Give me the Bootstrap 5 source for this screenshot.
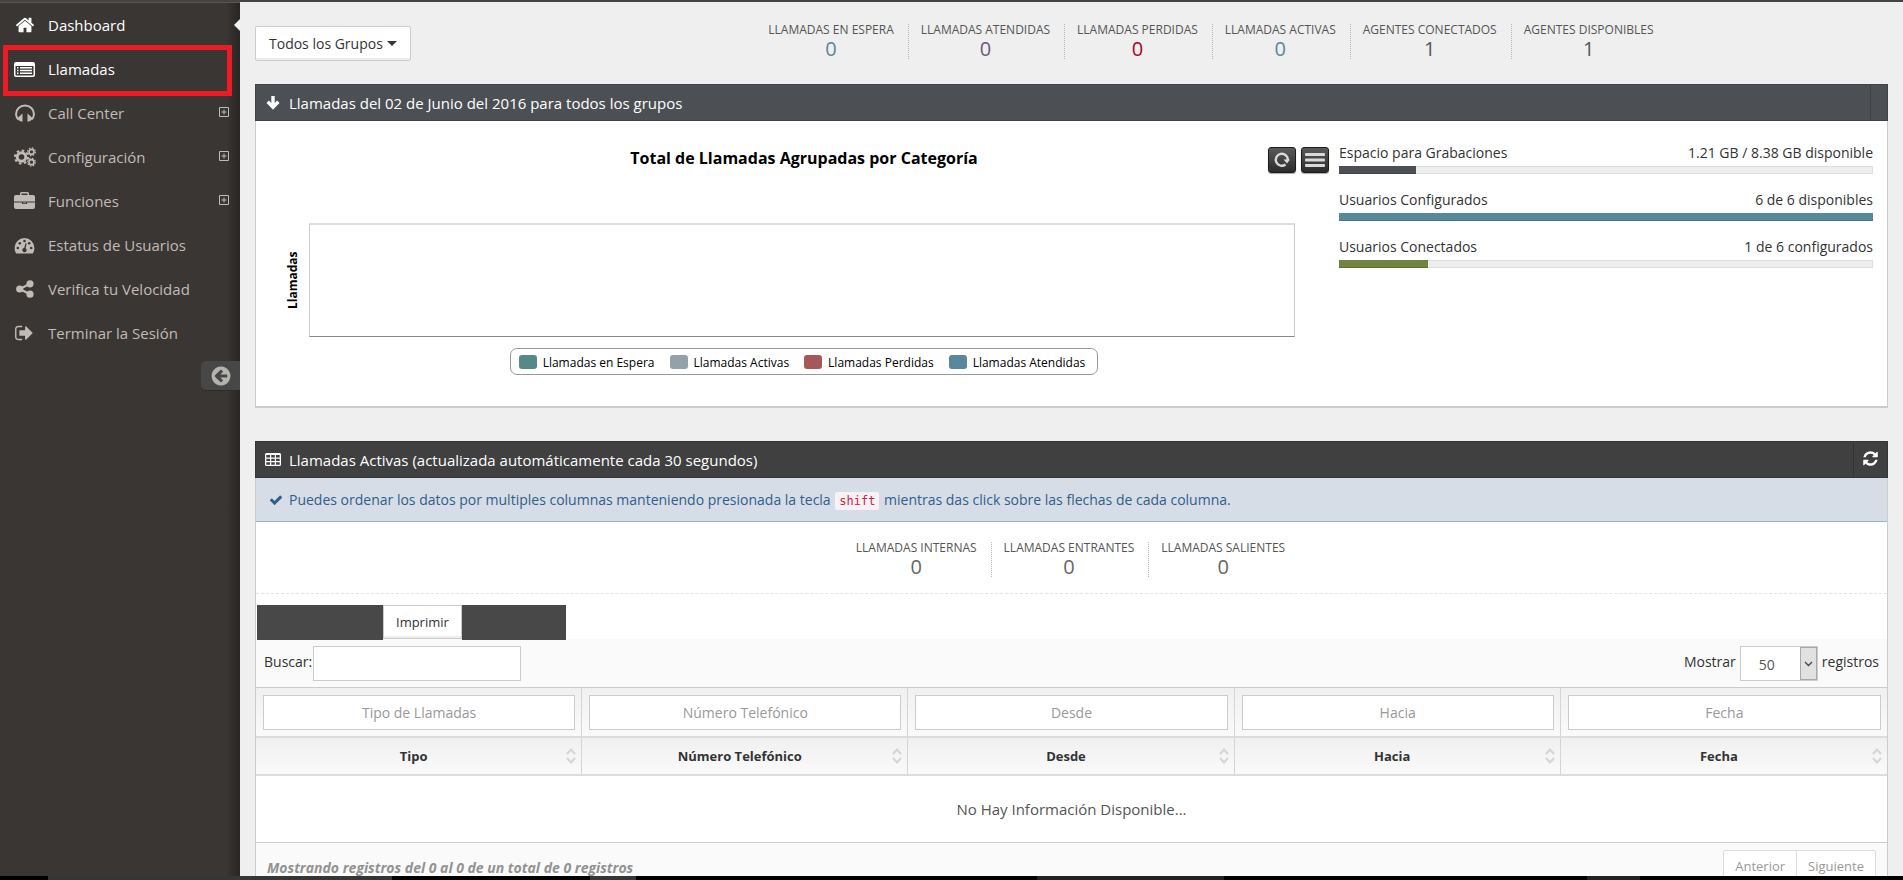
<!DOCTYPE html>
<html lang="es">
<head>
<meta charset="utf-8">
<meta name="viewport" content="width=device-width, initial-scale=1">
<title>Llamadas - Dashboard</title>
<link href="https://cdn.jsdelivr.net/npm/bootstrap@5.3.0/dist/css/bootstrap.min.css" rel="stylesheet">
<style>
  body { font-family: "Open Sans", "Noto Sans", sans-serif; font-size: 14px; line-height: 20px; color: #333; background: #efefef; }
  a { text-decoration: none; }
  svg { display: block; fill: currentColor; flex: none; }

  .top-line { height: 2px; background: #474341; }
  .sidebar { width: 240px; flex: none; color: #c0bbb7; padding-top: 1px;
    background: linear-gradient(to left, #292522, #3a3633 14px); box-shadow: inset 0 1px 0 #5a5652; }
  .side-link { height: 44px; padding: 0 11px 0 14px; gap: 12px; font-size: 15px; color: #c0bbb7; position: relative; }
  .side-link:hover, .side-link.active { color: #fff; }
  .side-link .expand { margin: 0 0 2px auto; }
  .pointer::before { content: ""; position: absolute; right: 0; top: 16px; border: 6px solid transparent; border-left: 0; border-right-color: #eef1f6; }
  .marked::after { content: ""; position: absolute; inset: -2px 8px -5px 3px; border: 5px solid #ed1c24; }
  .minify { width: 39px; height: 30px; margin-top: 6px; border: 0; border-bottom: 1px solid #2c2927; border-radius: 5px 0 0 5px; background: #474747; color: #b5b3b0; }

  .page { padding: 24px 15px 0; }
  .page-head { margin-bottom: 23px; }
  .group-btn { height: 35px; padding: 0 13px; font-size: 14px; background: #fff; color: #333; border: 1px solid #ccc; border-radius: 2px; box-shadow: inset 0 -2px 0 #ededed; gap: 4px; }
  .group-btn:hover { background: #f5f5f5; border-color: #adadad; color: #333; }
  .caret-down { border: 5px solid transparent; border-top-color: #333; border-bottom: 0; }
  .stat { height: 35px; padding: 0 14px 0 12px; text-align: center; border-left: 1px dotted #b5b5b5; }
  .stat:first-child { border-left: 0; }
  .stat-label { font-size: 12px; line-height: 11px; color: #555; text-transform: uppercase; }
  .stat-value { font-size: 20px; line-height: 28px; color: #666; }
  .page-stats { margin: -2px 13.5% 0 0; }
  .v-blue { color: #57889c; } .v-purple { color: #6e587a; } .v-red { color: #a90329; } .v-dark { color: #555; }

  .widget-head { height: 37px; padding-left: 9px; font-size: 15px; color: #fff; border: 1px solid rgba(0, 0, 0, .15); }
  .widget-head h2 { font-size: 15px; line-height: 20px; font-weight: 400; margin: 0; }
  .widget-head .icon-cell { width: 16px; }
  .widget-head.slate { background: #4c4f53; }
  .widget-head.dark { background: #404040; }
  .head-end { border: 0; border-left: 1px solid rgba(0, 0, 0, .18); background: none; color: #fff; }
  .widget-body { background: #fff; border: 1px solid #ccc; border-top: 0; }
  .widget-body.calls { border-bottom-width: 2px; }
  .widget-gap { margin-top: 33px; }

  .chart { padding: 25px 44px 31px 29px; font-family: "Open Sans", sans-serif; color: #000; position: relative; }
  .chart-title { font-size: 16px; line-height: 24px; font-weight: 700; margin: 0 0 53px; padding-left: 28px; text-align: center; }
  .chart-tools { position: absolute; top: 26px; right: 10px; gap: 5px; }
  .chart-tool { width: 28px; height: 26px; border: 1px solid #1c1c1c; border-radius: 3px; background: linear-gradient(#5a5a5a, #2b2b2b); color: #dadada; padding: 0; box-shadow: 0 1px 1px #aaa; }
  .axis-name { width: 24px; font-size: 12px; line-height: 16px; font-weight: 700; writing-mode: vertical-rl; transform: rotate(180deg); text-align: center; padding-left: 7px; }
  .plot { height: 114px; border: 1px solid #ccc; border-top: 2px solid #dedede; border-bottom-color: #888; }
  .legend-row { padding-left: 28px; margin-top: 11px; }
  .legend-box { height: 27px; border: 1px solid #999; border-radius: 7px; padding: 2px 12px 0 8px; gap: 15px; font-size: 12px; }
  .legend-item { gap: 6px; }
  .swatch { width: 18px; height: 14px; border-radius: 3px; margin-bottom: 2px; }

  .usage { width: 33.6%; flex: none; padding: 22px 14px 0 0; }
  .usage-item { margin-bottom: 16px; }
  .usage .progress { height: 8px; margin-top: 3px; border-radius: 0; background: #ededed; box-shadow: inset 0 0 0 1px #dedede; }
  .usage .progress-bar { box-shadow: inset 0 -1px 0 rgba(0, 0, 0, .15); }
  .b-slate { background-color: #4c4f53; } .b-blue { background-color: #57889c; } .b-green { background-color: #71843f; }

  .tip { height: 44px; margin: 0; padding: 0 14px 0 13px; gap: 6px; background: #d6dde7; border-bottom: 1px solid #9cb4c5; color: #305d8c; }
  .tip code { font: 12px/17px "DejaVu Sans Mono", monospace; color: #c7254e; background: #f9f2f4; border-radius: 2px; padding: 2px 4px; margin: 0 1px; }
  .call-stats { padding: 20px 0 16px; border-bottom: 1px dashed #e5e5e5; }
  .export { margin: 11px 0 0 1px; height: 34px; }
  .export .btn { font-size: 13px; line-height: 20px; padding: 0 12px; border: 1px solid #ccc; border-radius: 0; background: #fff; color: #333; box-shadow: inset 0 -2px 0 #ededed; }
  .export .btn.blank { background: #484848; border-color: #484848; box-shadow: none; margin-bottom: -1px; }
  .blank-wide { width: 126px; } .blank-narrow { width: 104px; }

  .grid-bar { background: #fafafa; padding: 7px 8px 6px; border-bottom: 1px solid #ccc; }
  .grid-bar .bar-text { padding-top: 6px; }
  .grid-input { height: 35px; border: 1px solid #ccc; border-radius: 0; background: #fff; color: #555; font-size: 14px; padding: 0 12px; }
  .grid-input::placeholder { color: #999; opacity: 1; }
  .search-box { width: 208px; margin-left: 1px; }
  .select-wrap { position: relative; width: 78px; margin: 0 4px; }
  .select-wrap select { width: 100%; appearance: none; padding: 2px 0 0 18px; }
  .select-wrap .drop { position: absolute; inset: 1px 1px 1px auto; width: 17px; background: #e1e1e1; border: 1px solid #a9a9a9; color: #444; pointer-events: none; }

  .grid-table { table-layout: fixed; border-collapse: separate; border-spacing: 0; margin: 0; }
  .grid-table th { background: linear-gradient(#f0f0f0, #fafafa); border-bottom: 2px solid #ddd; border-right: 1px solid #d5d5d5; padding: 0; }
  .grid-table th:last-child { border-right: 0; }
  .grid-table .filters th { padding: 7px 6px 6px 7px; }
  .grid-table .filters input { width: 100%; text-align: center; font-weight: 400; display: block; }
  .grid-table .titles th { height: 38px; font-size: 13px; color: #333; }
  .sort-cell { padding: 0 5px 0 13px; }
  .sort-cell svg { fill: none; stroke: #d5d5d5; stroke-width: 2; }
  .grid-table td { height: 67px; font-size: 15px; color: #555; text-align: center; vertical-align: middle; border-bottom: 1px solid #ccc; padding: 0; }
  .grid-foot { background: #fafafa; padding: 7px 11px 10px; color: #999; }
  .grid-foot .info { font-weight: 700; font-style: italic; padding-top: 8px; color: #929292; }
  .grid-foot .page-link { font-size: 13px; line-height: 20px; padding: 5px 11px; color: #999; border-color: #ddd; }
  .pagination { --bs-pagination-border-radius: 2px; margin: 0; }

  .taskbar { height: 4px; flex: none; background: linear-gradient(to right, #000 2.5%, #363636 2.5% 20.6%, #000 20.6% 31%, #363636 31% 33.4%, #000 33.4% 54.5%, #222 54.5% 64.3%, #000 64.3% 83.4%, #222 83.4% 86.2%, #000 86.2%); }
</style>
</head>
<body class="vh-100 overflow-hidden d-flex flex-column">
<div class="top-line flex-shrink-0"></div>
<div class="d-flex flex-grow-1 overflow-hidden">

  <nav class="sidebar d-flex flex-column" aria-label="Principal">
    <a href="#" class="side-link active pointer d-flex align-items-center">
      <svg width="22" height="20" viewBox="0 0 1792 1792"><path d="M1472 992v480q0 26-19 45t-45 19h-384v-384h-256v384h-384q-26 0-45-19t-19-45v-480q0-1 .5-3t.5-3l575-474 575 474q1 2 1 6zm223-69l-62 74q-8 9-21 11h-3q-13 0-21-7l-692-577-692 577q-12 8-24 7-13-2-21-11l-62-74q-8-10-7-23.500t11-21.500l719-599q32-26 76-26t76 26l244 204v-195q0-14 9-23t23-9h192q14 0 23 9t9 23v408l219 182q10 8 11 21.500t-7 23.500z"/></svg>
      <span>Dashboard</span></a>
    <a href="#" class="side-link active marked d-flex align-items-center">
      <svg width="22" height="20" viewBox="0 0 22 20"><path fill-rule="evenodd" d="M2 3h17a2 2 0 0 1 2 2v11a2 2 0 0 1-2 2H2a2 2 0 0 1-2-2V5a2 2 0 0 1 2-2zM1.500 7v9l.5.500h17l.5-.5V7z"/><path d="M3 8h1.500v1.500H3zM6 8h12v1.500H6zM3 10.700h1.500v1.500H3zM6 10.700h12v1.500H6zM3 13.400h1.500v1.500H3zM6 13.400h12v1.500H6z"/></svg>
      <span>Llamadas</span></a>
    <a href="#" class="side-link d-flex align-items-center">
      <svg width="22" height="20" viewBox="0 0 22 20"><path d="M4.500 16.500A8 8 0 0 1 2 11.200a9 8.700 0 0 1 18 0 8 8 0 0 1-2.500 5.300" fill="none" stroke="currentColor" stroke-width="2"/><path d="M8.500 10.500v8.300Q5 18.300 3 15.500zM13.500 10.500v8.300q3.500-.5 5.500-3.300z"/></svg>
      <span>Call Center</span>
      <svg class="expand" width="10" height="10" viewBox="0 0 10 10"><path d="M.5.500h9v9h-9zM2.500 5h5M5 2.500v5" fill="none" stroke="currentColor"/></svg></a>
    <a href="#" class="side-link d-flex align-items-center">
      <svg width="22" height="20" viewBox="0 0 22 20"><g fill="none" stroke="currentColor"><circle cx="7.500" cy="10" r="4.300" stroke-width="3"/><circle cx="7.500" cy="10" r="6.600" stroke-width="2" stroke-dasharray="2.600 2.583"/><circle cx="17.500" cy="4.800" r="2.500" stroke-width="1.700"/><circle cx="17.500" cy="4.800" r="3.900" stroke-width="1.200" stroke-dasharray="1.500 1.563"/><circle cx="17.500" cy="15.200" r="2.500" stroke-width="1.700"/><circle cx="17.500" cy="15.200" r="3.900" stroke-width="1.200" stroke-dasharray="1.500 1.563"/></g></svg>
      <span>Configuración</span>
      <svg class="expand" width="10" height="10" viewBox="0 0 10 10"><path d="M.5.500h9v9h-9zM2.500 5h5M5 2.500v5" fill="none" stroke="currentColor"/></svg></a>
    <a href="#" class="side-link d-flex align-items-center">
      <svg width="22" height="20" viewBox="0 0 22 20"><path fill-rule="evenodd" d="M6 4V2.500Q6 1 7.500 1h6Q15 1 15 2.500V4h4q2 0 2 2v4.500H0V6q0-2 2-2zM7.500 4h6V2.500h-6zM0 11.500h8V13h5v-1.500h8V16q0 2-2 2H2q-2 0-2-2zM9 11.500h3v.700H9z"/></svg>
      <span>Funciones</span>
      <svg class="expand" width="10" height="10" viewBox="0 0 10 10"><path d="M.5.500h9v9h-9zM2.500 5h5M5 2.500v5" fill="none" stroke="currentColor"/></svg></a>
    <a href="#" class="side-link d-flex align-items-center">
      <svg width="22" height="20" viewBox="0 0 22 20"><path d="M2.200 18.500A9.900 9.900 0 0 1 .6 13a9.900 9.900 0 0 1 19.800 0 9.900 9.900 0 0 1-1.600 5.500z"/><g fill="#3a3633"><circle cx="3.800" cy="13" r="1.300"/><circle cx="5.800" cy="8.200" r="1.300"/><circle cx="10.500" cy="6" r="1.300"/><circle cx="15.200" cy="8.200" r="1.300"/><circle cx="17.200" cy="13" r="1.300"/><path d="M11.500 8.200l1.200.3-1.100 4.700a2.200 2.200 0 1 1-1.400-.3z"/></g></svg>
      <span>Estatus de Usuarios</span></a>
    <a href="#" class="side-link d-flex align-items-center">
      <svg width="22" height="20" viewBox="0 0 22 20"><circle cx="5.700" cy="10" r="3.600"/><circle cx="16" cy="4.800" r="3.600"/><circle cx="16" cy="15.200" r="3.600"/><path d="M16 4.800L5.700 10 16 15.200" fill="none" stroke="currentColor" stroke-width="2.200"/></svg>
      <span>Verifica tu Velocidad</span></a>
    <a href="#" class="side-link d-flex align-items-center">
      <svg width="22" height="20" viewBox="60 0 1792 1792"><path d="M704 1440q0 4 1 20t.5 26.500-3 23.500-10 19.500-20.500 6.500h-320q-119 0-203.500-84.500t-84.500-203.500v-704q0-119 84.500-203.500t203.500-84.500h320q13 0 22.500 9.500t9.500 22.500q0 4 1 20t.5 26.500-3 23.500-10 19.500-20.500 6.500h-320q-66 0-113 47t-47 113v704q0 66 47 113t113 47h312l11.500 1 11.500 3 8 5.500 7 9 2 13.500zm928-544q0 26-19 45l-544 544q-19 19-45 19t-45-19-19-45v-288h-448q-26 0-45-19t-19-45v-384q0-26 19-45t45-19h448v-288q0-26 19-45t45-19 45 19l544 544q19 19 19 45z"/></svg>
      <span>Terminar la Sesión</span></a>
    <button type="button" class="minify align-self-end d-flex align-items-center justify-content-center" aria-label="Contraer menú">
      <svg width="22" height="22" viewBox="0 0 1792 1792"><path d="M1408 960v-128q0-26-19-45t-45-19h-502l189-189q19-19 19-45t-19-45l-91-91q-18-18-45-18t-45 18l-362 362-91 91q-18 18-18 45t18 45l91 91 362 362q18 18 45 18t45-18l91-91q18-18 18-45t-18-45l-189-189h502q26 0 45-19t19-45zm256-64q0 209-103 385.500t-279.500 279.500-385.500 103-385.500-103-279.500-279.500-103-385.500 103-385.500 279.500-279.500 385.500-103 385.500 103 279.500 279.500 103 385.500z"/></svg>
    </button>
  </nav>

  <main class="page flex-grow-1 overflow-hidden">
    <div class="page-head d-flex justify-content-between">
      <button type="button" class="btn group-btn d-flex align-items-center">Todos los Grupos<span class="caret-down"></span></button>
      <ul class="page-stats list-unstyled d-flex">
        <li class="stat"><div class="stat-label">Llamadas en espera</div><div class="stat-value v-blue">0</div></li>
        <li class="stat"><div class="stat-label">Llamadas atendidas</div><div class="stat-value v-purple">0</div></li>
        <li class="stat"><div class="stat-label">Llamadas perdidas</div><div class="stat-value v-red">0</div></li>
        <li class="stat"><div class="stat-label">Llamadas activas</div><div class="stat-value v-blue">0</div></li>
        <li class="stat"><div class="stat-label">Agentes conectados</div><div class="stat-value v-dark">1</div></li>
        <li class="stat"><div class="stat-label">Agentes disponibles</div><div class="stat-value v-dark">1</div></li>
      </ul>
    </div>

    <section>
      <header class="widget-head slate d-flex">
        <div class="d-flex align-items-center gap-2 flex-grow-1">
          <svg class="icon-cell" height="16" viewBox="0 0 16 16"><path d="M6.300 1h3.400v7l2.500-2.400L14.500 8 8 14.700 1.500 8l2.300-2.400L6.300 8z"/></svg>
          <h2>Llamadas del 02 de Junio del 2016 para todos los grupos</h2>
        </div>
        <div class="head-end ps-3"></div>
      </header>
      <div class="widget-body calls d-flex">
        <div class="chart flex-grow-1">
          <h3 class="chart-title">Total de Llamadas Agrupadas por Categoría</h3>
          <div class="chart-tools d-flex">
            <button type="button" class="chart-tool d-flex align-items-center justify-content-center" aria-label="Recargar">
              <svg width="18" height="18" viewBox="0 0 18 18"><path d="M12.500 13.500A6 6 0 1 1 14.800 9" fill="none" stroke="currentColor" stroke-width="2.400"/><path d="M10.500 8.500h6.500l-3 4z"/></svg></button>
            <button type="button" class="chart-tool d-flex align-items-center justify-content-center" aria-label="Menú">
              <svg width="20" height="18" viewBox="0 0 20 18"><rect y="2" width="20" height="3" rx="1"/><rect y="7.500" width="20" height="3" rx="1"/><rect y="13" width="20" height="3" rx="1"/></svg></button>
          </div>
          <div class="d-flex">
            <div class="axis-name">Llamadas</div>
            <div class="plot flex-grow-1"></div>
          </div>
          <div class="legend-row d-flex justify-content-center">
            <div class="legend-box d-flex align-items-center">
              <div class="legend-item d-flex align-items-center"><span class="swatch" style="background:#568a89"></span>Llamadas en Espera</div>
              <div class="legend-item d-flex align-items-center"><span class="swatch" style="background:#92a2a8"></span>Llamadas Activas</div>
              <div class="legend-item d-flex align-items-center"><span class="swatch" style="background:#a65858"></span>Llamadas Perdidas</div>
              <div class="legend-item d-flex align-items-center"><span class="swatch" style="background:#57889c"></span>Llamadas Atendidas</div>
            </div>
          </div>
        </div>
        <div class="usage">
          <div class="usage-item">
            <div class="d-flex justify-content-between"><span>Espacio para Grabaciones</span><span>1.21 GB / 8.38 GB disponible</span></div>
            <div class="progress"><div class="progress-bar b-slate" style="width:14.4%"></div></div>
          </div>
          <div class="usage-item">
            <div class="d-flex justify-content-between"><span>Usuarios Configurados</span><span>6 de 6 disponibles</span></div>
            <div class="progress"><div class="progress-bar b-blue" style="width:100%"></div></div>
          </div>
          <div class="usage-item">
            <div class="d-flex justify-content-between"><span>Usuarios Conectados</span><span>1 de 6 configurados</span></div>
            <div class="progress"><div class="progress-bar b-green" style="width:16.7%"></div></div>
          </div>
        </div>
      </div>
    </section>

    <section class="widget-gap">
      <header class="widget-head dark d-flex">
        <div class="d-flex align-items-center gap-2 flex-grow-1">
          <svg class="icon-cell" height="16" viewBox="0 0 16 16"><path fill-rule="evenodd" d="M1.500 1h13Q16 1 16 2.500v10q0 1.500-1.500 1.500h-13Q0 14 0 12.500v-10Q0 1 1.500 1zM1.300 3v2.500H5V3zM6.200 3v2.500h3.600V3zM11 3v2.500h3.700V3zM1.300 6.700v2.300H5V6.700zM6.200 6.700v2.300h3.600V6.700zM11 6.700v2.300h3.700V6.700zM1.300 10.200v2.500H5v-2.500zM6.200 10.200v2.500h3.600v-2.500zM11 10.200v2.500h3.700v-2.500z"/></svg>
          <h2>Llamadas Activas (actualizada automáticamente cada 30 segundos)</h2>
        </div>
        <button type="button" class="head-end px-2 pb-1 d-flex align-items-center" aria-label="Actualizar">
          <svg width="17" height="17" viewBox="0 0 1792 1792"><path d="M1639 1056q0 5-1 7-64 268-268 434.500t-478 166.500q-146 0-282.500-55t-243.500-157l-129 129q-19 19-45 19t-45-19-19-45v-448q0-26 19-45t45-19h448q26 0 45 19t19 45-19 45l-137 137q71 66 161 102t187 36q134 0 250-65t186-179q11-17 53-117 8-23 30-23h192q13 0 22.500 9.500t9.500 22.500zm25-800v448q0 26-19 45t-45 19h-448q-26 0-45-19t-19-45 19-45l138-138q-148-137-349-137-134 0-250 65t-186 179q-11 17-53 117-8 23-30 23h-199q-13 0-22.500-9.500t-9.500-22.500v-7q65-268 270-434.500t480-166.500q146 0 284 55.500t245 156.500l130-129q19-19 45-19t45 19 19 45z"/></svg>
        </button>
      </header>
      <div class="widget-body">
        <div class="tip d-flex align-items-center">
          <svg width="14" height="14" viewBox="0 0 1792 1792"><path d="M1671 566q0 40-28 68l-724 724-136 136q-28 28-68 28t-68-28l-136-136-362-362q-28-28-28-68t28-68l136-136q28-28 68-28t68 28l294 295 656-657q28-28 68-28t68 28l136 136q28 28 28 68z"/></svg>
          <p class="m-0">Puedes ordenar los datos por multiples columnas manteniendo presionada la tecla <code>shift</code> mientras das click sobre las flechas de cada columna.</p>
        </div>
        <ul class="call-stats list-unstyled d-flex justify-content-center m-0">
          <li class="stat"><div class="stat-label">Llamadas internas</div><div class="stat-value">0</div></li>
          <li class="stat"><div class="stat-label">Llamadas entrantes</div><div class="stat-value">0</div></li>
          <li class="stat"><div class="stat-label">Llamadas salientes</div><div class="stat-value">0</div></li>
        </ul>
        <div class="export d-flex">
          <button type="button" class="btn blank blank-wide" aria-label="Exportar"></button>
          <button type="button" class="btn">Imprimir</button>
          <button type="button" class="btn blank blank-narrow" aria-label="Columnas"></button>
        </div>
        <div class="grid-bar d-flex justify-content-between">
          <div class="d-flex">
            <label for="buscar" class="bar-text">Buscar:</label>
            <input id="buscar" type="search" class="grid-input search-box">
          </div>
          <div class="d-flex">
            <label for="mostrar" class="bar-text">Mostrar</label>
            <span class="select-wrap">
              <select id="mostrar" class="grid-input"><option>10</option><option selected>50</option><option>100</option></select>
              <span class="drop d-flex align-items-center justify-content-center"><svg width="9" height="6" viewBox="0 0 9 6"><path d="M1 1l3.500 3.500L8 1" fill="none" stroke="currentColor" stroke-width="1.300"/></svg></span>
            </span>
            <span class="bar-text">registros</span>
          </div>
        </div>
        <table class="grid-table w-100">
          <thead>
            <tr class="filters">
              <th><input class="grid-input" type="text" placeholder="Tipo de Llamadas" aria-label="Tipo de Llamadas"></th>
              <th><input class="grid-input" type="text" placeholder="Número Telefónico" aria-label="Número Telefónico"></th>
              <th><input class="grid-input" type="text" placeholder="Desde" aria-label="Desde"></th>
              <th><input class="grid-input" type="text" placeholder="Hacia" aria-label="Hacia"></th>
              <th><input class="grid-input" type="text" placeholder="Fecha" aria-label="Fecha"></th>
            </tr>
            <tr class="titles">
              <th scope="col"><div class="sort-cell d-flex align-items-center"><span class="flex-grow-1 text-center pe-2">Tipo</span><svg width="10" height="16" viewBox="0 0 10 16"><path d="M1 6l4-4.500L9 6M1 10l4 4.500L9 10"/></svg></div></th>
              <th scope="col"><div class="sort-cell d-flex align-items-center"><span class="flex-grow-1 text-center pe-2">Número Telefónico</span><svg width="10" height="16" viewBox="0 0 10 16"><path d="M1 6l4-4.500L9 6M1 10l4 4.500L9 10"/></svg></div></th>
              <th scope="col"><div class="sort-cell d-flex align-items-center"><span class="flex-grow-1 text-center pe-2">Desde</span><svg width="10" height="16" viewBox="0 0 10 16"><path d="M1 6l4-4.500L9 6M1 10l4 4.500L9 10"/></svg></div></th>
              <th scope="col"><div class="sort-cell d-flex align-items-center"><span class="flex-grow-1 text-center pe-2">Hacia</span><svg width="10" height="16" viewBox="0 0 10 16"><path d="M1 6l4-4.500L9 6M1 10l4 4.500L9 10"/></svg></div></th>
              <th scope="col"><div class="sort-cell d-flex align-items-center"><span class="flex-grow-1 text-center pe-2">Fecha</span><svg width="10" height="16" viewBox="0 0 10 16"><path d="M1 6l4-4.500L9 6M1 10l4 4.500L9 10"/></svg></div></th>
            </tr>
          </thead>
          <tbody><tr><td colspan="5">No Hay Información Disponible...</td></tr></tbody>
        </table>
        <div class="grid-foot d-flex justify-content-between">
          <div class="info">Mostrando registros del 0 al 0 de un total de 0 registros</div>
          <ul class="pagination">
            <li class="page-item"><a class="page-link" href="#">Anterior</a></li>
            <li class="page-item"><a class="page-link" href="#">Siguiente</a></li>
          </ul>
        </div>
      </div>
    </section>
  </main>
</div>
<div class="taskbar"></div>
<script src="https://cdn.jsdelivr.net/npm/bootstrap@5.3.0/dist/js/bootstrap.bundle.min.js"></script>
</body>
</html>
